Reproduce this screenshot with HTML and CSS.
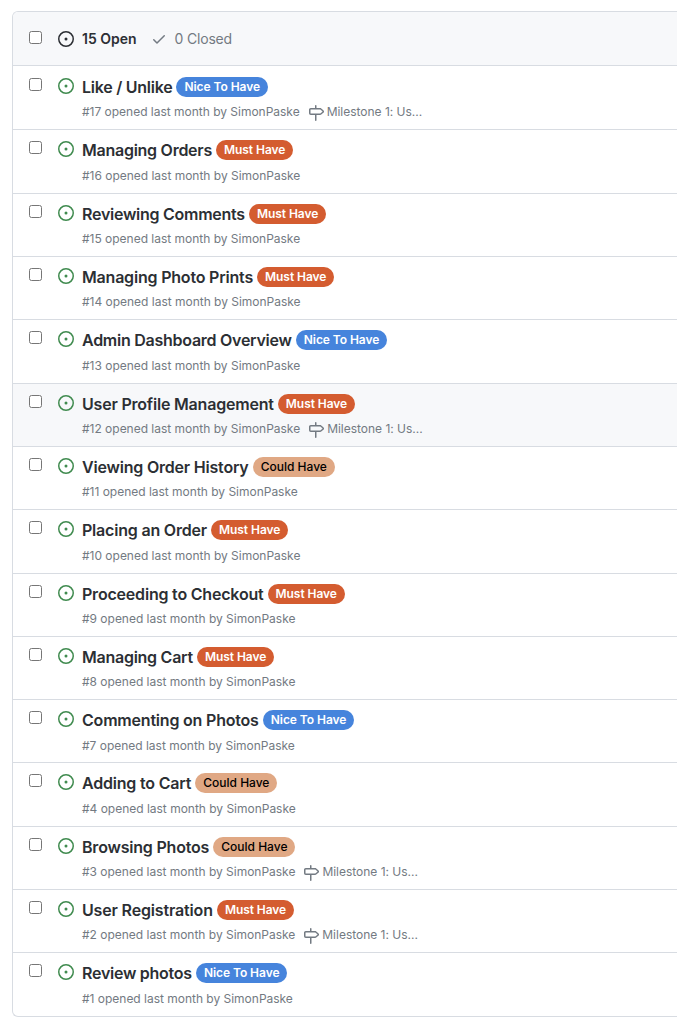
FILE: index.html
```html
<!DOCTYPE html>
<html lang="en">
<head>
<meta charset="utf-8">
<title>Issues</title>
<link rel="stylesheet" href="styles.css">
</head>
<body>
<svg class="defs" aria-hidden="true">
<symbol id="open" viewBox="0 0 16 16"><path d="M8 9.5a1.5 1.5 0 1 0 0-3 1.5 1.5 0 0 0 0 3Z"/><path d="M8 0a8 8 0 1 1 0 16A8 8 0 0 1 8 0ZM1.5 8a6.5 6.5 0 1 0 13 0 6.5 6.5 0 0 0-13 0Z"/></symbol>
<symbol id="check" viewBox="0 0 16 16"><path d="M13.78 4.22a.75.75 0 0 1 0 1.06l-7.25 7.25a.75.75 0 0 1-1.06 0L2.22 9.28a.751.751 0 0 1 .018-1.042.751.751 0 0 1 1.042-.018L6 10.94l6.72-6.72a.75.75 0 0 1 1.06 0Z"/></symbol>
<symbol id="milestone" viewBox="0 0 16 16"><path d="M7.75 0a.75.75 0 0 1 .75.75V3h3.634c.414 0 .814.147 1.13.414l2.07 1.75a1.75 1.75 0 0 1 0 2.672l-2.07 1.75a1.75 1.75 0 0 1-1.13.414H8.5v5.25a.75.75 0 0 1-1.5 0V10H2.75A1.75 1.75 0 0 1 1 8.25v-3.5C1 3.784 1.784 3 2.75 3H7V.75A.75.75 0 0 1 7.75 0Zm4.384 8.5a.25.25 0 0 0 .161-.06l2.07-1.75a.248.248 0 0 0 0-.38l-2.07-1.75a.25.25 0 0 0-.161-.06H2.75a.25.25 0 0 0-.25.25v3.5c0 .138.112.25.25.25h9.384Z"/></symbol>
</svg>
<main class="box">
<header class="header"><span class="checkbox"></span><svg class="icon"><use href="#open"/></svg><span class="count">15 Open</span><svg class="icon muted"><use href="#check"/></svg><span class="closed">0 Closed</span></header>
<article class="row first"><span class="checkbox"></span><svg class="icon green"><use href="#open"/></svg><div class="body"><div class="line"><span class="title tight">Like / Unlike</span><span class="label nice">Nice To Have</span></div><div class="meta"><span>#17 opened last month by SimonPaske</span><svg class="icon"><use href="#milestone"/></svg><span>Milestone 1: Us...</span></div></div></article>
<article class="row"><span class="checkbox"></span><svg class="icon green"><use href="#open"/></svg><div class="body"><div class="line"><span class="title tight">Managing Orders</span><span class="label must">Must Have</span></div><div class="meta"><span>#16 opened last month by SimonPaske</span></div></div></article>
<article class="row"><span class="checkbox"></span><svg class="icon green"><use href="#open"/></svg><div class="body"><div class="line"><span class="title tight">Reviewing Comments</span><span class="label must">Must Have</span></div><div class="meta"><span>#15 opened last month by SimonPaske</span></div></div></article>
<article class="row"><span class="checkbox"></span><svg class="icon green"><use href="#open"/></svg><div class="body"><div class="line"><span class="title">Managing Photo Prints</span><span class="label must">Must Have</span></div><div class="meta"><span>#14 opened last month by SimonPaske</span></div></div></article>
<article class="row"><span class="checkbox"></span><svg class="icon green"><use href="#open"/></svg><div class="body"><div class="line"><span class="title tight">Admin Dashboard Overview</span><span class="label nice">Nice To Have</span></div><div class="meta"><span>#13 opened last month by SimonPaske</span></div></div></article>
<article class="row active"><span class="checkbox"></span><svg class="icon green"><use href="#open"/></svg><div class="body"><div class="line"><span class="title">User Profile Management</span><span class="label must">Must Have</span></div><div class="meta"><span>#12 opened last month by SimonPaske</span><svg class="icon"><use href="#milestone"/></svg><span>Milestone 1: Us...</span></div></div></article>
<article class="row"><span class="checkbox"></span><svg class="icon green"><use href="#open"/></svg><div class="body"><div class="line"><span class="title">Viewing Order History</span><span class="label could">Could Have</span></div><div class="meta"><span>#11 opened last month by SimonPaske</span></div></div></article>
<article class="row"><span class="checkbox"></span><svg class="icon green"><use href="#open"/></svg><div class="body"><div class="line"><span class="title">Placing an Order</span><span class="label must">Must Have</span></div><div class="meta"><span>#10 opened last month by SimonPaske</span></div></div></article>
<article class="row"><span class="checkbox"></span><svg class="icon green"><use href="#open"/></svg><div class="body"><div class="line"><span class="title">Proceeding to Checkout</span><span class="label must">Must Have</span></div><div class="meta"><span>#9 opened last month by SimonPaske</span></div></div></article>
<article class="row"><span class="checkbox"></span><svg class="icon green"><use href="#open"/></svg><div class="body"><div class="line"><span class="title tight">Managing Cart</span><span class="label must">Must Have</span></div><div class="meta"><span>#8 opened last month by SimonPaske</span></div></div></article>
<article class="row"><span class="checkbox"></span><svg class="icon green"><use href="#open"/></svg><div class="body"><div class="line"><span class="title">Commenting on Photos</span><span class="label nice">Nice To Have</span></div><div class="meta"><span>#7 opened last month by SimonPaske</span></div></div></article>
<article class="row"><span class="checkbox"></span><svg class="icon green"><use href="#open"/></svg><div class="body"><div class="line"><span class="title">Adding to Cart</span><span class="label could">Could Have</span></div><div class="meta"><span>#4 opened last month by SimonPaske</span></div></div></article>
<article class="row"><span class="checkbox"></span><svg class="icon green"><use href="#open"/></svg><div class="body"><div class="line"><span class="title">Browsing Photos</span><span class="label could">Could Have</span></div><div class="meta"><span>#3 opened last month by SimonPaske</span><svg class="icon"><use href="#milestone"/></svg><span>Milestone 1: Us...</span></div></div></article>
<article class="row"><span class="checkbox"></span><svg class="icon green"><use href="#open"/></svg><div class="body"><div class="line"><span class="title loose">User Registration</span><span class="label must">Must Have</span></div><div class="meta"><span>#2 opened last month by SimonPaske</span><svg class="icon"><use href="#milestone"/></svg><span>Milestone 1: Us...</span></div></div></article>
<article class="row"><span class="checkbox"></span><svg class="icon green"><use href="#open"/></svg><div class="body"><div class="line"><span class="title tight">Review photos</span><span class="label nice">Nice To Have</span></div><div class="meta"><span>#1 opened last month by SimonPaske</span></div></div></article>
</main>
</body>
</html>
```
FILE: styles.css
```css
* { box-sizing: border-box; }
body { margin: 0; padding: 11px 0 0 12px; background: #fff; color: #2c2f34; font-family: Inter, "Liberation Sans", sans-serif; overflow: hidden; }
.defs { display: none; }
.box { border: 1px solid #d8dce2; border-right: 0; border-radius: 6px 0 0 6px; overflow: hidden; }
.header { display: flex; align-items: center; height: 53px; padding-left: 16px; background: #f7f8fa; font-size: 14px; }
.header .checkbox { margin: 0 16px 3px 0; }
.header .icon { margin-right: 8px; }
.count { font-weight: 600; margin-right: 14px; }
.closed, .muted { color: #737a82; }
.closed { letter-spacing: -0.2px; }
.checkbox { flex: none; width: 13px; height: 13px; border: 1px solid #767676; border-radius: 2.5px; background: #fff; }
.icon { flex: none; width: 16px; height: 16px; fill: currentColor; }
.green { color: #408b4f; }
.row { display: flex; align-items: flex-start; height: 63.3125px; padding-left: 16px; border-top: 1px solid #d8dce2; }
.first { height: 64.36px; padding-top: 1px; }
.row > .checkbox { margin: 11px 16px 0 0; }
.row > .icon { margin: 11px 8px 0 0; }
.active { background: #f7f8fa; }
.body { padding-top: 8px; }
.line { display: flex; align-items: center; height: 24px; gap: 4.1px; white-space: nowrap; }
.title { font-size: 16px; line-height: 24px; font-weight: 600; letter-spacing: -0.2px; }
.tight { letter-spacing: -0.26px; }
.loose { letter-spacing: -0.16px; }
.label { height: 20px; padding: 0 8px; border-radius: 10px; font-size: 12px; line-height: 20px; font-weight: 600; letter-spacing: -0.06px; color: #fff; }
.nice { background: #4684dc; }
.must { background: #d45c30; }
.could { background: #e0a884; color: #000; font-weight: 500; letter-spacing: 0; }
.meta { display: flex; align-items: center; height: 18px; margin-top: 4.33px; font-size: 12px; line-height: 18px; letter-spacing: -0.015px; color: #737a82; white-space: nowrap; }
.meta .icon { margin: 2px 3px 0 8px; }
```
